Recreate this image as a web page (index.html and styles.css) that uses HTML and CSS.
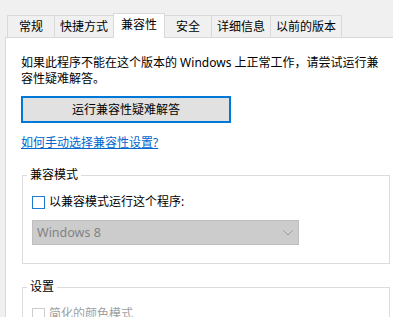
FILE: index.html
```html
<!DOCTYPE html>
<html lang="zh-CN">
<head>
<meta charset="utf-8">
<title>兼容性</title>
<link rel="stylesheet" href="styles.css">
</head>
<body>
<div class="dialog">
  <div class="tabs">
    <div class="tab">常规</div>
    <div class="tab">快捷方式</div>
    <div class="tab active">兼容性</div>
    <div class="tab">安全</div>
    <div class="tab">详细信息</div>
    <div class="tab">以前的版本</div>
  </div>
  <div class="panel">
    <p class="intro">如果此程序不能在这个版本的 Windows 上正常工作，请尝试运行兼容性疑难解答。</p>
    <button class="btn" type="button">运行兼容性疑难解答</button>
    <a class="link" href="#">如何手动选择兼容性设置?</a>
    <fieldset class="group">
      <legend>兼容模式</legend>
      <label class="check">
        <span class="box"></span>
        <span>以兼容模式运行这个程序:</span>
      </label>
      <div class="select">
        <span>Windows 8</span>
        <svg class="chev" width="10" height="6" viewBox="0 0 10 6"><path d="M0.5 0.5 L5 5 L9.5 0.5" fill="none" stroke="#9a9a9a" stroke-width="1"/></svg>
      </div>
    </fieldset>
    <fieldset class="group settings">
      <legend>设置</legend>
      <label class="check disabled">
        <span class="box"></span>
        <span>简化的颜色模式</span>
      </label>
    </fieldset>
  </div>
</div>
</body>
</html>
```

FILE: styles.css
```css
html, body {
  margin: 0;
  padding: 0;
}
body {
  width: 393px;
  height: 317px;
  overflow: hidden;
  background: #f0f0f0;
  font-family: "Segoe UI", "Noto Sans", "Noto Sans CJK SC", sans-serif;
  font-size: 12px;
  line-height: 16px;
  color: #000;
}
.dialog {
  padding: 13px 0 0 5px;
}
.tabs {
  display: flex;
  align-items: flex-end;
  height: 24px;
  padding-left: 2px;
}
.tab {
  box-sizing: border-box;
  height: 22px;
  min-width: 48px;
  padding: 3px 5px 0;
  border: 1px solid #d9d9d9;
  border-bottom: none;
  margin-right: -1px;
  text-align: center;
  white-space: nowrap;
  background: #f0f0f0;
}
.tab.active {
  height: 25px;
  min-width: 52px;
  padding: 3px 7px 0;
  margin-bottom: -1px;
  background: #fff;
  position: relative;
  z-index: 1;
}
.panel {
  box-sizing: border-box;
  width: 402px;
  height: 280px;
  overflow: hidden;
  border: 1px solid #d9d9d9;
  border-bottom: none;
  background: #fff;
  padding: 17px 15px 0;
}
.intro {
  margin: 0;
  width: 364px;
}
.btn {
  display: block;
  box-sizing: border-box;
  width: 210px;
  height: 27px;
  margin-top: 9px;
  padding: 0;
  border: 2px solid #0078d7;
  background: #e1e1e1;
  font: inherit;
  color: #000;
  text-align: center;
}
.link {
  display: inline-block;
  margin-top: 12px;
  color: #0066cc;
  text-decoration: underline;
}
.group {
  box-sizing: border-box;
  width: 368px;
  margin: 16px 0 0 1px;
  padding: 0 9px 18px;
  border: 1px solid #dcdcdc;
  min-width: 0;
}
.group legend {
  padding: 0 3px;
  margin-left: -5px;
}
.check {
  display: flex;
  align-items: center;
  gap: 4px;
  margin-top: 11px;
  height: 16px;
}
.box {
  box-sizing: border-box;
  width: 13px;
  height: 13px;
  border: 1px solid #1e7ad2;
  background: #fff;
}
.check.disabled {
  color: #a0a0a0;
}
.check.disabled .box {
  border-color: #cccccc;
}
.select {
  box-sizing: border-box;
  display: flex;
  align-items: center;
  justify-content: space-between;
  width: 267px;
  height: 25px;
  margin-top: 10px;
  padding: 0 5px 0 4px;
  border: 1px solid #bfbfbf;
  background: #cccccc;
  color: #838383;
  font-size: 12.5px;
}
.chev {
  display: block;
}
.settings {
  margin-top: 15px;
}
```
